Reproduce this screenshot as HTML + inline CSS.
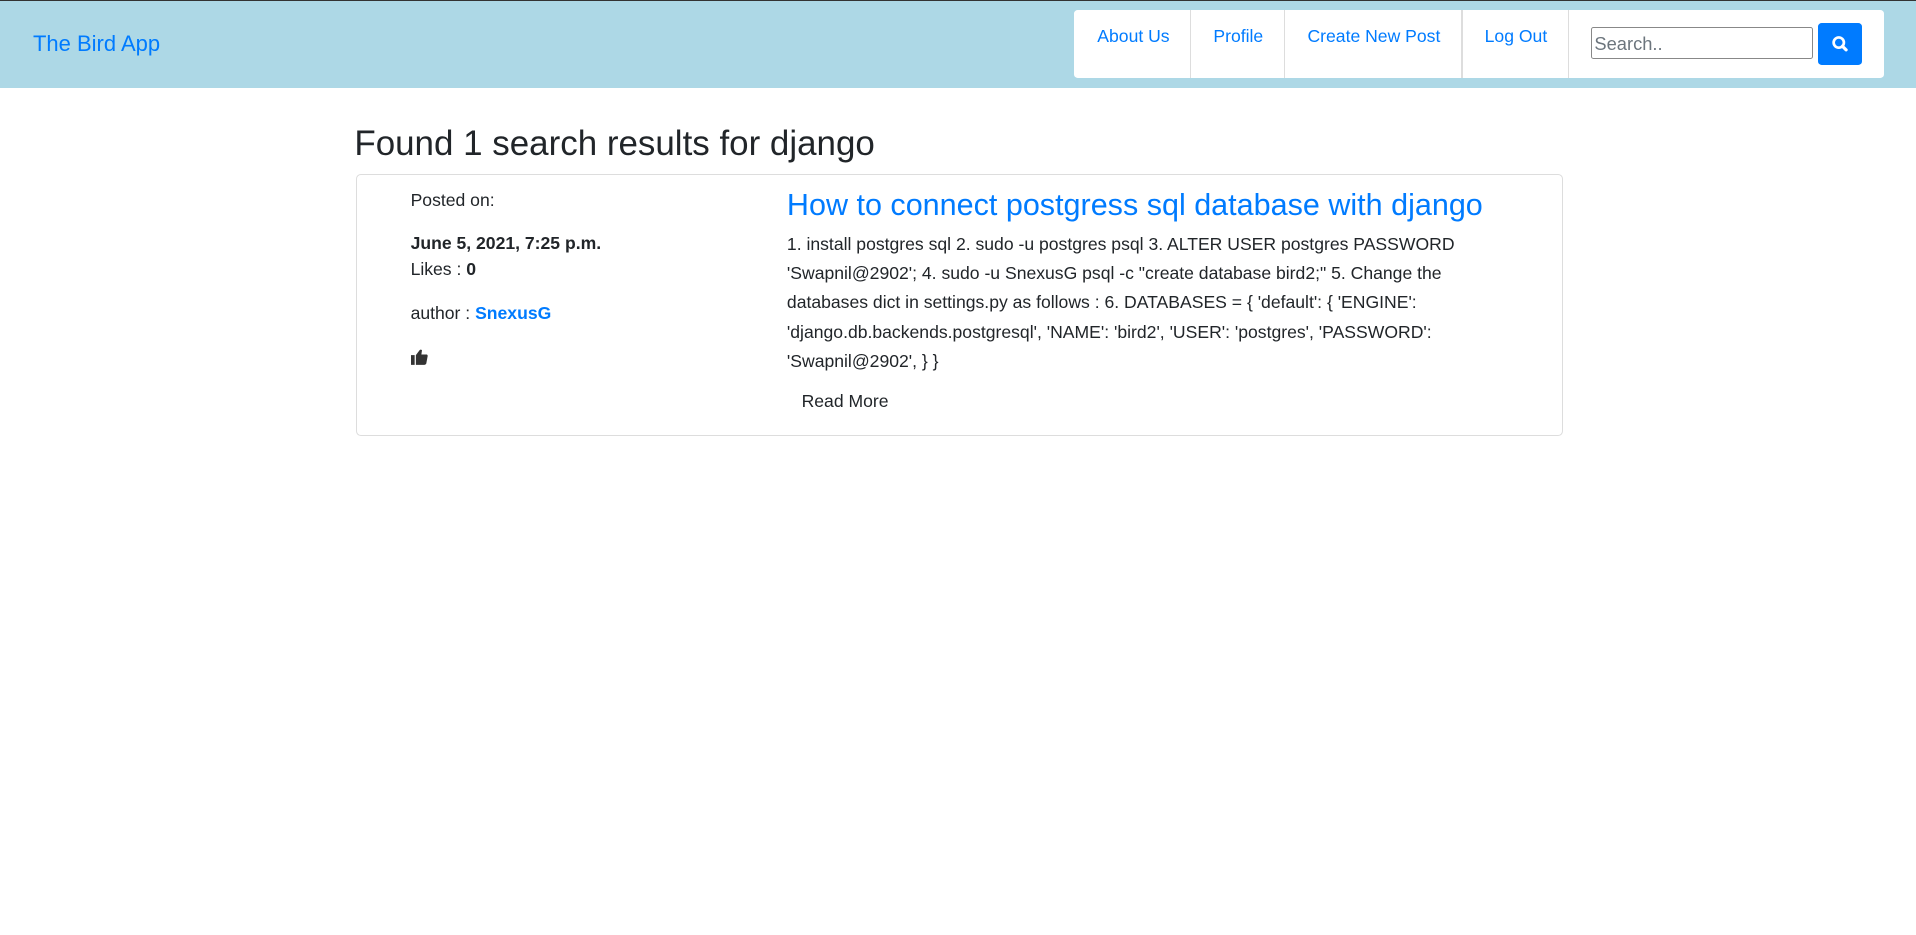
<!DOCTYPE html>
<html><head><style>
html,body{margin:0;padding:0;background:#fff;}
body{zoom:1.22194;width:1568px;height:765px;position:relative;overflow:hidden;font-family:"Liberation Sans",Arial,sans-serif;color:#212529;font-size:14.4px;line-height:24px;}
.a{position:absolute;white-space:nowrap;}
.nav{position:absolute;left:0;top:0;width:1568px;height:72px;background:#add8e6;border-top:1px solid #333;box-sizing:border-box;}
.box{position:absolute;left:879px;top:8px;width:663px;height:56px;background:#fff;border-radius:3px;}
.div{position:absolute;top:8px;width:1px;height:56px;background:#ddd;}
.link{color:#007bff;}
</style></head><body>
<div class="nav"></div>
<div class="a link" style="left:27px;top:24px;font-size:18px;">The Bird App</div>
<div class="box"></div>
<div class="div" style="left:974px"></div>
<div class="div" style="left:1051px"></div>
<div class="div" style="left:1196px"></div>
<div class="div" style="left:1283px"></div>
<div class="a link" style="left:898px;top:18px;">About Us</div>
<div class="a link" style="left:993px;top:18px;">Profile</div>
<div class="a link" style="left:1070px;top:18px;">Create New Post</div>
<div class="a link" style="left:1215px;top:18px;">Log Out</div>
<div class="a" style="left:1302px;top:22px;width:182px;height:26px;border:1px solid #888;border-radius:2px;color:#6c757d;font-size:15px;line-height:26px;padding-left:2px;box-sizing:border-box;">Search..</div>
<div class="a" style="left:1488px;top:19px;width:36px;height:34px;background:#007bff;border-radius:3px;">
<svg width="36" height="34" viewBox="0 0 36 34"><circle cx="17" cy="16" r="4.2" fill="none" stroke="#fff" stroke-width="2.2"/><path d="M20 19l3 3" stroke="#fff" stroke-width="2.6" stroke-linecap="round"/></svg></div>

<div class="a" style="left:290px;top:99px;font-size:28.6px;line-height:38px;">Found 1 search results for django</div>
<div class="a" style="left:291px;top:142px;width:988px;height:215px;border:1px solid #ddd;border-radius:4px;box-sizing:border-box;"></div>
<div class="a" style="left:336px;top:152px;">Posted on:</div>
<div class="a" style="left:336px;top:187px;font-weight:bold;">June 5, 2021, 7:25 p.m.</div>
<div class="a" style="left:336px;top:209px;">Likes : <b>0</b></div>
<div class="a" style="left:336px;top:245px;">author : <b class="link">SnexusG</b></div>
<svg class="a" style="left:336px;top:286px" width="14" height="13" viewBox="0 0 14 13"><rect x="0" y="5" width="3" height="8" fill="#333"/><path d="M4 5 L7 1 Q8 0 9 1 L8.5 4.5 H13 Q14 5 13.5 6.5 L12.5 12 Q12 13 11 13 H4 Z" fill="#333"/></svg>
<div class="a link" style="left:644px;top:152px;font-size:25px;line-height:32px;">How to connect postgress sql database with django</div>
<div class="a" style="left:644px;top:188px;line-height:24px;">1. install postgres sql 2. sudo -u postgres psql 3. ALTER USER postgres PASSWORD<br>'Swapnil@2902'; 4. sudo -u SnexusG psql -c "create database bird2;" 5. Change the<br>databases dict in settings.py as follows : 6. DATABASES = { 'default': { 'ENGINE':<br>'django.db.backends.postgresql', 'NAME': 'bird2', 'USER': 'postgres', 'PASSWORD':<br>'Swapnil@2902', } }</div>
<div class="a" style="left:656px;top:317px;">Read More</div>
</body></html>
